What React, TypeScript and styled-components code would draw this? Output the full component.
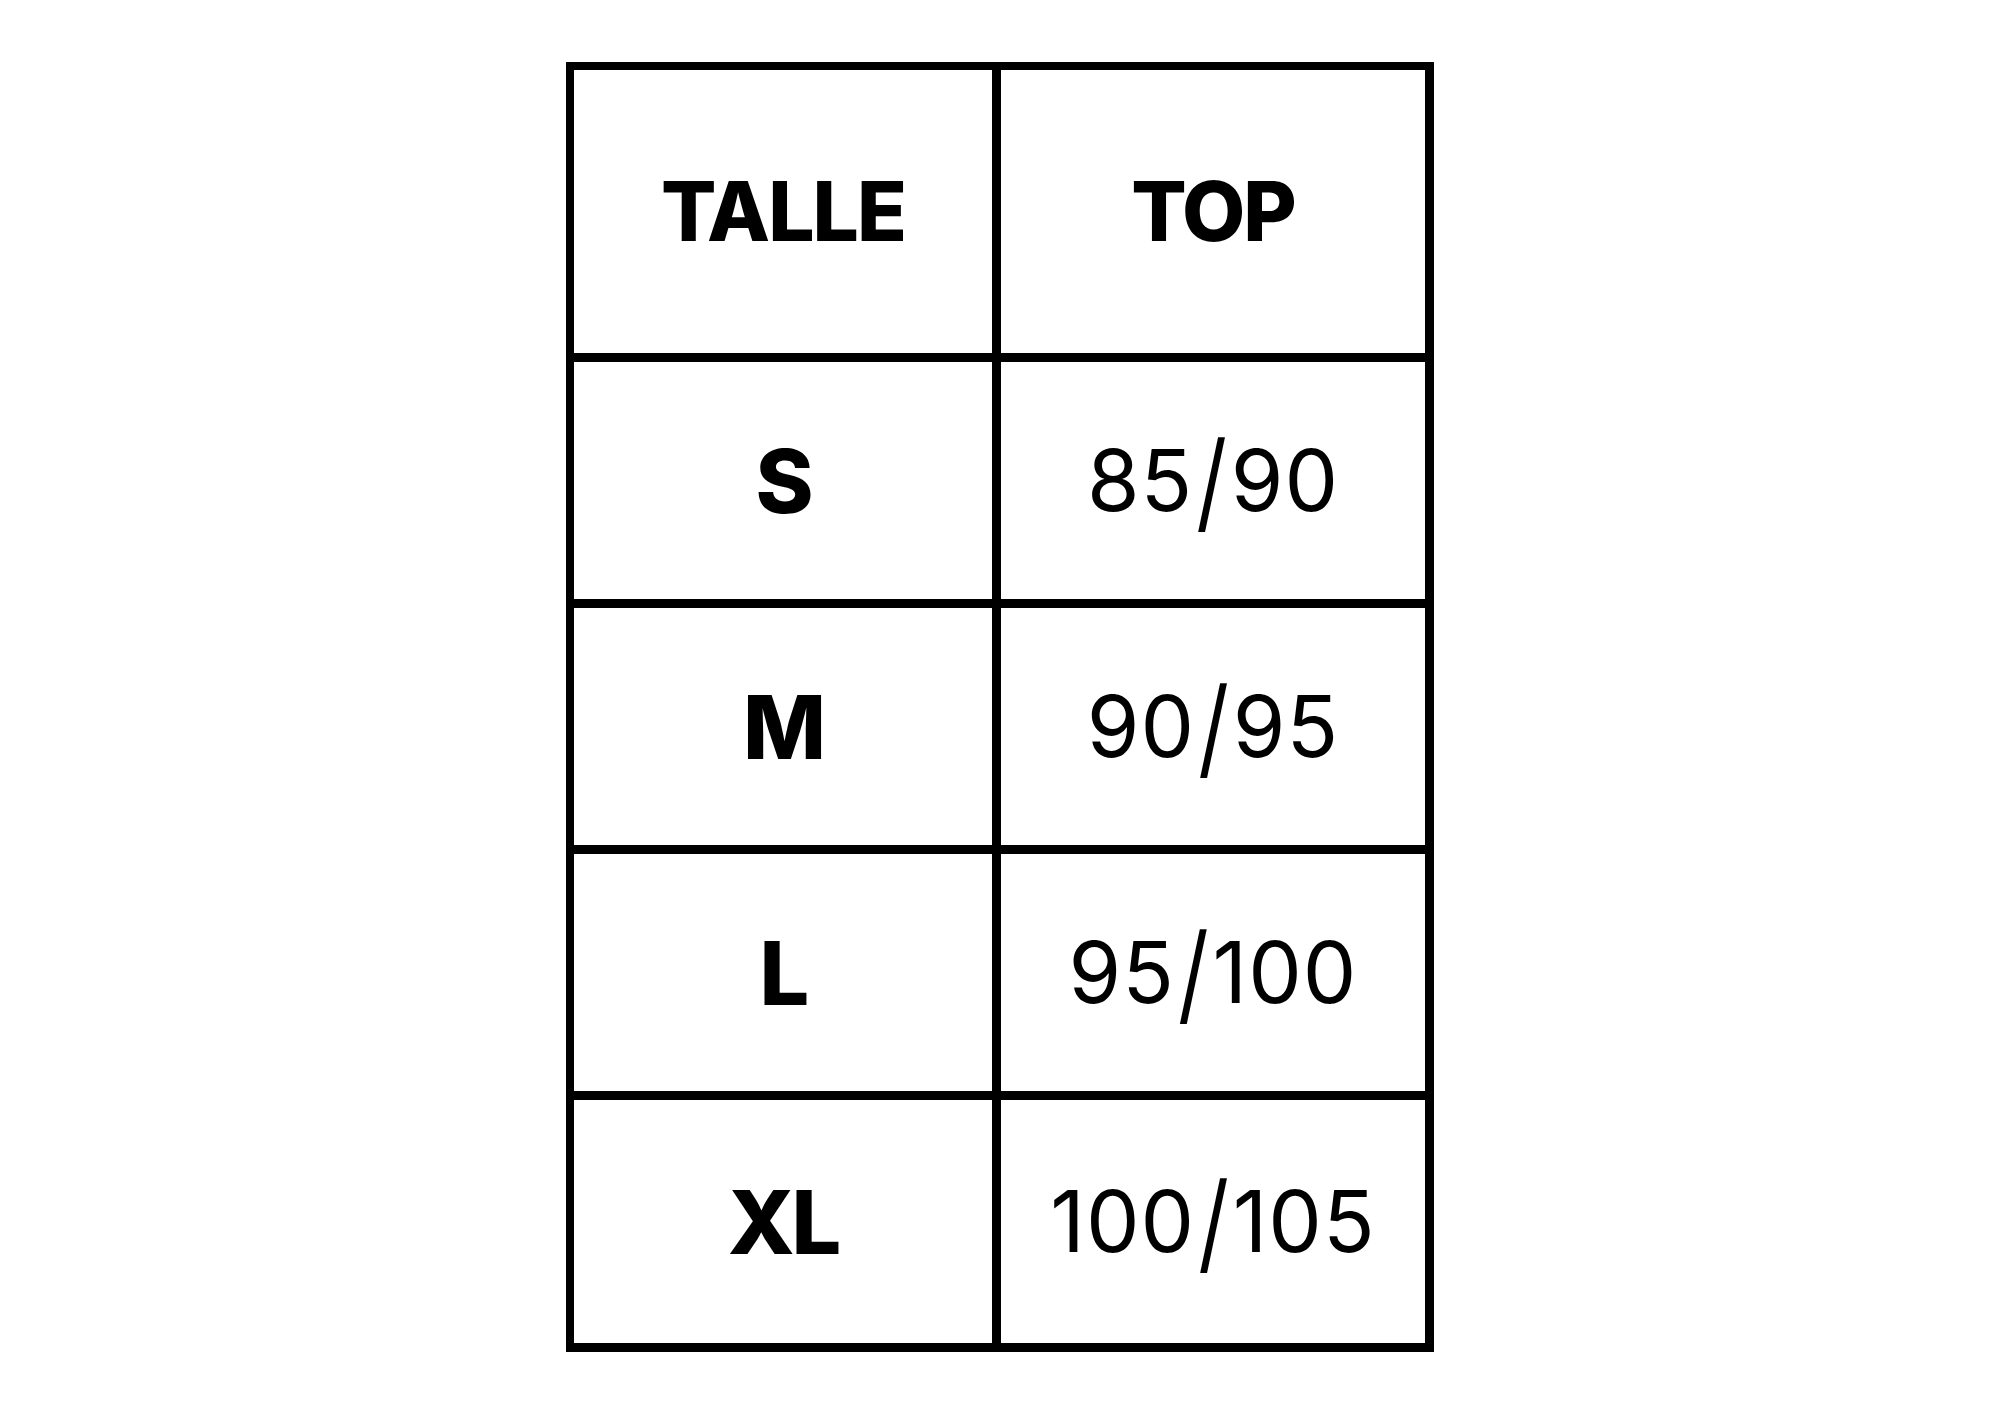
import React from "react";
import styled, { createGlobalStyle } from "styled-components";

const GlobalStyle = createGlobalStyle`
  html, body {
    margin: 0;
    padding: 0;
    background: #ffffff;
  }
  body {
    font-family: Inter, "Open Sans", "Liberation Sans", sans-serif;
    color: #000000;
  }
`;

const Page = styled.div`
  width: 100%;
  min-height: 100vh;
  display: flex;
  align-items: center;
  justify-content: center;
  background: #ffffff;
`;

const SizeTable = styled.div`
  display: grid;
  grid-template-columns: 418px 424px;
  grid-template-rows: 283px 237px 237px 237px 243px;
  gap: 9px;
  padding: 8px 9px 9px 8px;
  background: #000000;
`;

type Variant = "head" | "label" | "value";

const Cell = styled.div<{ $variant: Variant }>`
  background: #ffffff;
  display: flex;
  align-items: center;
  justify-content: center;
  color: #000000;
  line-height: 1;
  white-space: nowrap;
  font-family: Inter, "Open Sans", "Liberation Sans", sans-serif;
  font-size: ${(p) =>
    p.$variant === "head" ? "82px" : p.$variant === "label" ? "88px" : "85px"};
  font-weight: ${(p) => (p.$variant === "value" ? 400 : 800)};
  letter-spacing: ${(p) =>
    p.$variant === "value" ? "1px" : p.$variant === "head" ? "-2px" : "-3px"};
`;

const Slash = styled.span`
  display: inline-block;
  transform: scaleY(1.28);
  margin: 0 3px;
`;

const rows: [string, string][] = [
  ["S", "85/90"],
  ["M", "90/95"],
  ["L", "95/100"],
  ["XL", "100/105"],
];

export default function App() {
  return (
    <>
      <GlobalStyle />
      <Page>
        <SizeTable>
          <Cell $variant="head">TALLE</Cell>
          <Cell $variant="head">TOP</Cell>
          {rows.map(([size, top]) => {
            const [a, b] = top.split("/");
            return (
              <React.Fragment key={size}>
                <Cell $variant="label">{size}</Cell>
                <Cell $variant="value">
                  {a}
                  <Slash>/</Slash>
                  {b}
                </Cell>
              </React.Fragment>
            );
          })}
        </SizeTable>
      </Page>
    </>
  );
}
